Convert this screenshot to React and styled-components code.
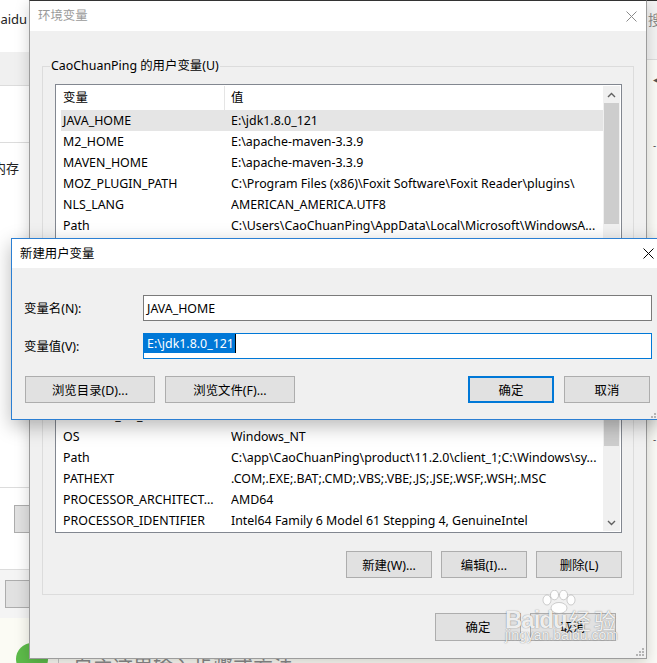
import React from 'react';
import styled, { createGlobalStyle } from 'styled-components';

const FONT = `"Noto Sans", "Noto Sans CJK SC", sans-serif`;

const Global = createGlobalStyle`
  html, body { margin: 0; padding: 0; }
  body { font-family: ${FONT}; font-size: 12.4px; color: #000; overflow: hidden; }
  * { box-sizing: border-box; }
`;

const Desktop = styled.div`
  position: relative;
  width: 657px;
  height: 663px;
  overflow: hidden;
  background: #fbfbf4;
`;

/* ---------- background app (left) ---------- */
const BackLeft = styled.div`
  position: absolute;
  left: 0;
  top: 0;
  width: 40px;
  height: 618px;
  background: #fff;
  display: flex;
  flex-direction: column;
  overflow: hidden;
  z-index: 1;
`;
const BackSection = styled.div`
  height: ${p => p.$h}px;
  flex: none;
  background: ${p => p.$bg || '#fff'};
  border-bottom: ${p => (p.$line ? '1px solid #dcdcdc' : 'none')};
  padding-top: ${p => p.$pt || 0}px;
  padding-left: ${p => p.$pl || 0}px;
`;
const BackText = styled.div`
  font-size: 13px;
  line-height: 14px;
  color: #222;
  white-space: nowrap;
  margin-left: ${p => p.$ml}px;
`;
const BackButton = styled.div`
  width: 40px;
  height: 28px;
  background: #e1e1e1;
  border: 1px solid #adadad;
`;
const BackRight = styled.div`
  position: absolute;
  left: 646px;
  top: 0;
  width: 11px;
  height: 663px;
  background: #fbfbf7;
  display: flex;
  flex-direction: column;
  z-index: 1;
`;
const BackRightTop = styled.div`
  height: 60px;
  flex: none;
  background: #f3f3f3;
  border-top: 1px solid #2e2e2e;
  border-bottom: 1px solid #dcdcdc;
  padding-top: 10px;
  padding-left: 2px;
  font-size: 14px;
  line-height: 18px;
  color: #8a8a8a;
  overflow: hidden;
  white-space: nowrap;
`;
const BackMark = styled.div`
  margin-top: ${p => p.$mt}px;
  padding-left: 7px;
  font-size: 10px;
  line-height: 10px;
  color: #555;
`;
const GreenDot = styled.div`
  position: absolute;
  left: 16px;
  top: 643px;
  width: 32px;
  height: 32px;
  border-radius: 50%;
  background: #5dbb4a;
  z-index: 0;
`;
const BottomText = styled.div`
  position: absolute;
  left: 58px;
  top: 655px;
  border-left: 1px solid #c8c8c8;
  padding-left: 14px;
  font-size: 20px;
  line-height: 26px;
  color: #8a8a8a;
  white-space: nowrap;
  z-index: 0;
`;

/* ---------- windows ---------- */
const Window = styled.div`
  position: absolute;
  left: 29px;
  top: 0;
  width: 618px;
  height: 659px;
  border: 1px solid #9c9c9c;
  border-top-color: #333;
  background: #f0f0f0;
  display: flex;
  flex-direction: column;
  box-shadow: 0 4px 14px rgba(0, 0, 0, 0.18);
  z-index: 2;
`;
const Dialog = styled.div`
  position: absolute;
  left: 11px;
  top: 238px;
  width: 649px;
  height: 182px;
  border: 1px solid #2b7fd3;
  background: #f0f0f0;
  display: flex;
  flex-direction: column;
  box-shadow: 0 6px 18px rgba(0, 0, 0, 0.28);
  z-index: 5;
`;
const TitleBar = styled.div`
  height: ${p => p.$h}px;
  flex: none;
  background: #fff;
  display: flex;
  align-items: center;
  padding-left: 8px;
  color: ${p => (p.$dim ? '#9a9a9a' : '#000')};
`;
const TitleText = styled.div`
  flex: 1;
  line-height: 16px;
`;
const CloseBox = styled.div`
  width: ${p => p.$w}px;
  height: 100%;
  display: flex;
  align-items: center;
  justify-content: center;
  flex: none;
`;
const Body = styled.div`
  flex: 1;
  display: flex;
  flex-direction: column;
  padding: 0 12px;
  position: relative;
`;
const Group = styled.div`
  margin-top: ${p => p.$mt}px;
  border: 1px solid #dcdcdc;
  display: flex;
  flex-direction: column;
  padding: 0 11px 16px 12px;
`;
const Legend = styled.div`
  align-self: flex-start;
  margin: -10px 0 0 -5px;
  padding: 0 1px;
  height: 18px;
  line-height: 18px;
  background: #f0f0f0;
`;
const ListBox = styled.div`
  margin-top: 9px;
  height: 175px;
  border: 1px solid #828790;
  background: #fff;
  padding: 1px;
  display: flex;
`;
const ListMain = styled.div`
  flex: 1;
  overflow: hidden;
  display: flex;
  flex-direction: column;
`;
const Header = styled.div`
  height: 24px;
  flex: none;
  display: flex;
`;
const HeadCell = styled.div`
  width: ${p => (p.$w ? `${p.$w}px` : 'auto')};
  flex: ${p => (p.$w ? 'none' : '1')};
  padding-left: 6px;
  line-height: 24px;
  border-right: ${p => (p.$sep ? '1px solid #e5e5e5' : 'none')};
`;
const Row = styled.div`
  height: 21px;
  flex: none;
  margin-left: 4px;
  display: flex;
  align-items: center;
  background: ${p => (p.$sel ? '#e5e5e5' : 'transparent')};
  white-space: nowrap;
`;
const Cell = styled.div`
  width: ${p => (p.$w ? `${p.$w}px` : 'auto')};
  flex: ${p => (p.$w ? 'none' : '1')};
  padding-left: ${p => p.$pl || 0}px;
  line-height: 21px;
  overflow: hidden;
`;
const Scrollbar = styled.div`
  width: 17px;
  flex: none;
  background: #f0f0f0;
  display: flex;
  flex-direction: column;
`;
const ArrowBtn = styled.div`
  height: 17px;
  flex: none;
  display: flex;
  align-items: center;
  justify-content: center;
`;
const Track = styled.div`
  flex: 1;
  display: flex;
  flex-direction: column;
`;
const Thumb = styled.div`
  margin: ${p => p.$mt}px 1px 0 1px;
  height: ${p => p.$h}px;
  background: #cdcdcd;
`;
const ButtonRow = styled.div`
  margin-top: ${p => p.$mt}px;
  margin-right: ${p => p.$mr || 0}px;
  padding-left: ${p => p.$pl || 0}px;
  display: flex;
  justify-content: ${p => p.$justify || 'flex-end'};
  gap: ${p => p.$gap}px;
  flex: none;
`;
const Button = styled.div`
  width: ${p => p.$w}px;
  height: ${p => p.$h || 27}px;
  background: #e1e1e1;
  border: ${p => (p.$primary ? '2px solid #0078d7' : '1px solid #adadad')};
  display: flex;
  align-items: center;
  justify-content: center;
  white-space: nowrap;
`;
const Spacer = styled.div`
  flex: 1;
`;
const Grip = styled.div`
  position: absolute;
  right: ${p => p.$r}px;
  bottom: ${p => p.$b}px;
  width: 8px;
  height: 8px;
  display: flex;
`;

/* ---------- dialog body ---------- */
const DialogBody = styled.div`
  flex: 1;
  display: flex;
  flex-direction: column;
  padding: 27px 7px 0 12px;
  position: relative;
`;
const FieldRow = styled.div`
  display: flex;
  align-items: center;
  height: 26px;
  margin-top: ${p => p.$mt || 0}px;
`;
const FieldLabel = styled.div`
  width: 119px;
  flex: none;
`;
const TextInput = styled.div`
  flex: 1;
  height: 26px;
  background: #fff;
  border: 1px solid ${p => (p.$focus ? '#0078d7' : '#7a7a7a')};
  display: flex;
  align-items: ${p => (p.$focus ? 'flex-start' : 'center')};
  padding-left: ${p => (p.$focus ? 0 : 3)}px;
`;
const Selection = styled.span`
  height: 19px;
  line-height: 20px;
  padding: 0 1px 0 3px;
  background: #0078d7;
  color: #fff;
`;
const Caret = styled.span`
  width: 1px;
  height: 19px;
  background: #000;
`;

/* ---------- watermark ---------- */
const Watermark = styled.div`
  position: absolute;
  left: 505px;
  top: 590px;
  z-index: 10;
  pointer-events: none;
  display: flex;
  flex-direction: column;
  color: rgba(255, 255, 255, 0.88);
  text-shadow: 0 0 1px rgba(0, 0, 0, 0.4), 0 0 2px rgba(0, 0, 0, 0.15);
`;
const WmTop = styled.div`
  display: flex;
  align-items: flex-end;
  height: 42px;
`;
const WmBrand = styled.span`
  font-family: "Liberation Sans", sans-serif;
  font-weight: bold;
  font-size: 24px;
  line-height: 24px;
  letter-spacing: -1px;
  position: relative;
`;
const WmCn = styled.span`
  font-family: "Noto Sans CJK SC", sans-serif;
  font-size: 22px;
  line-height: 26px;
  letter-spacing: 3px;
  margin-left: 2px;
`;
const WmUrl = styled.div`
  font-family: "Liberation Sans", sans-serif;
  font-size: 14px;
  line-height: 14px;
  margin-top: -4px;
`;
const Paw = styled.svg`
  position: absolute;
  left: 37px;
  top: -18px;
`;

const Chevron = ({ down }) => (
  <svg width="9" height="6" viewBox="0 0 9 6">
    <polyline
      points={down ? '1,1 4.5,4.5 8,1' : '1,5 4.5,1.5 8,5'}
      fill="none"
      stroke="#606060"
      strokeWidth="1.4"
    />
  </svg>
);

const XIcon = ({ color }) => (
  <svg width="11" height="11" viewBox="0 0 11 11">
    <path d="M0.5 0.5 L10.5 10.5 M10.5 0.5 L0.5 10.5" stroke={color} strokeWidth="1" />
  </svg>
);

const GripDots = () => (
  <svg width="8" height="8" viewBox="0 0 8 8">
    {[
      [6, 0],
      [3, 3],
      [6, 3],
      [0, 6],
      [3, 6],
      [6, 6],
    ].map(([x, y]) => (
      <rect key={`${x}-${y}`} x={x} y={y} width="2" height="2" fill="#b4b4b4" />
    ))}
  </svg>
);

const userVars = [
  ['JAVA_HOME', 'E:\\jdk1.8.0_121', true],
  ['M2_HOME', 'E:\\apache-maven-3.3.9'],
  ['MAVEN_HOME', 'E:\\apache-maven-3.3.9'],
  ['MOZ_PLUGIN_PATH', 'C:\\Program Files (x86)\\Foxit Software\\Foxit Reader\\plugins\\'],
  ['NLS_LANG', 'AMERICAN_AMERICA.UTF8'],
  ['Path', 'C:\\Users\\CaoChuanPing\\AppData\\Local\\Microsoft\\WindowsA...'],
  ['TEMP', '%USERPROFILE%\\AppData\\Local\\Temp'],
];

const sysVars = [
  ['ComSpec', 'C:\\Windows\\system32\\cmd.exe'],
  ['NUMBER_OF_PROCESSORS', '4'],
  ['OS', 'Windows_NT'],
  ['Path', 'C:\\app\\CaoChuanPing\\product\\11.2.0\\client_1;C:\\Windows\\sy...'],
  ['PATHEXT', '.COM;.EXE;.BAT;.CMD;.VBS;.VBE;.JS;.JSE;.WSF;.WSH;.MSC'],
  ['PROCESSOR_ARCHITECT...', 'AMD64'],
  ['PROCESSOR_IDENTIFIER', 'Intel64 Family 6 Model 61 Stepping 4, GenuineIntel'],
];

const VarList = ({ rows, thumbTop, thumbH }) => (
  <ListBox>
    <ListMain>
      <Header>
        <HeadCell $w={168} $sep>变量</HeadCell>
        <HeadCell>值</HeadCell>
      </Header>
      {rows.map(([k, v, sel]) => (
        <Row key={k + v} $sel={sel}>
          <Cell $w={170} $pl={2}>{k}</Cell>
          <Cell>{v}</Cell>
        </Row>
      ))}
    </ListMain>
    <Scrollbar>
      <ArrowBtn><Chevron /></ArrowBtn>
      <Track>
        <Thumb $mt={thumbTop} $h={thumbH} />
      </Track>
      <ArrowBtn><Chevron down /></ArrowBtn>
    </Scrollbar>
  </ListBox>
);

export default function App() {
  return (
    <>
      <Global />
      <Desktop>
        <BackLeft>
          <BackSection $h={52} $pt={12}>
            <BackText $ml={-8}>Baidu</BackText>
          </BackSection>
          <BackSection $h={34} $bg="#f0f0f0" $line />
          <BackSection $h={57} $line />
          <BackSection $h={345} $line $pt={18}>
            <BackText $ml={-7}>内存</BackText>
          </BackSection>
          <BackSection $h={82} $line $pt={17} $pl={14}>
            <BackButton />
          </BackSection>
          <BackSection $h={48} $bg="#f4f4f4" $pt={10} $pl={5}>
            <BackButton />
          </BackSection>
        </BackLeft>

        <BackRight>
          <BackRightTop>搜</BackRightTop>
          <BackMark $mt={14}>◂</BackMark>
          <BackMark $mt={56}>-</BackMark>
          <BackMark $mt={284}>-</BackMark>
        </BackRight>

        <GreenDot />
        <BottomText>自主这里输入步骤或方法</BottomText>

        <Window>
          <TitleBar $h={30} $dim>
            <TitleText>环境变量</TitleText>
            <CloseBox $w={30}><XIcon color="#8a8a8a" /></CloseBox>
          </TitleBar>
          <Body>
            <Group $mt={35}>
              <Legend>CaoChuanPing 的用户变量(U)</Legend>
              <VarList rows={userVars} thumbTop={0} thumbH={121} />
              <ButtonRow $mt={18} $gap={9}>
                <Button $w={86}>新建(N)...</Button>
                <Button $w={86}>编辑(E)...</Button>
                <Button $w={86}>删除(D)</Button>
              </ButtonRow>
            </Group>
            <Group $mt={19}>
              <Legend>系统变量(S)</Legend>
              <VarList rows={sysVars} thumbTop={10} thumbH={59} />
              <ButtonRow $mt={18} $gap={9}>
                <Button $w={86}>新建(W)...</Button>
                <Button $w={86}>编辑(I)...</Button>
                <Button $w={86}>删除(L)</Button>
              </ButtonRow>
            </Group>
            <ButtonRow $mt={18} $gap={9} $mr={18}>
              <Button $w={86} $h={28}>确定</Button>
              <Button $w={86} $h={28}>取消</Button>
            </ButtonRow>
            <Grip $r={2} $b={2}><GripDots /></Grip>
          </Body>
        </Window>

        <Dialog>
          <TitleBar $h={29}>
            <TitleText>新建用户变量</TitleText>
            <CloseBox $w={22}><XIcon color="#000" /></CloseBox>
          </TitleBar>
          <DialogBody>
            <FieldRow>
              <FieldLabel>变量名(N):</FieldLabel>
              <TextInput>JAVA_HOME</TextInput>
            </FieldRow>
            <FieldRow $mt={12}>
              <FieldLabel>变量值(V):</FieldLabel>
              <TextInput $focus>
                <Selection>E:\jdk1.8.0_121</Selection>
                <Caret />
              </TextInput>
            </FieldRow>
            <ButtonRow $mt={17} $gap={10} $pl={1} $mr={2} $justify="flex-start">
              <Button $w={130}>浏览目录(D)...</Button>
              <Button $w={130}>浏览文件(F)...</Button>
              <Spacer />
              <Button $w={86} $primary>确定</Button>
              <Button $w={86}>取消</Button>
            </ButtonRow>
            <Grip $r={0} $b={1}><GripDots /></Grip>
          </DialogBody>
        </Dialog>

        <Watermark>
          <WmTop>
            <WmBrand>
              Baidu
              <Paw width="34" height="24" viewBox="0 0 34 24">
                <g fill="rgba(255,255,255,0.9)" stroke="rgba(0,0,0,0.22)" strokeWidth="0.8">
                  <ellipse cx="5" cy="10" rx="4" ry="5" />
                  <ellipse cx="12.5" cy="5" rx="4" ry="4.8" />
                  <ellipse cx="21.5" cy="5" rx="4" ry="4.8" />
                  <ellipse cx="29" cy="10" rx="4" ry="5" />
                  <ellipse cx="17" cy="18" rx="8" ry="5.5" />
                </g>
              </Paw>
            </WmBrand>
            <WmCn>经验</WmCn>
          </WmTop>
          <WmUrl>jingyan.baidu.com</WmUrl>
        </Watermark>
      </Desktop>
    </>
  );
}
